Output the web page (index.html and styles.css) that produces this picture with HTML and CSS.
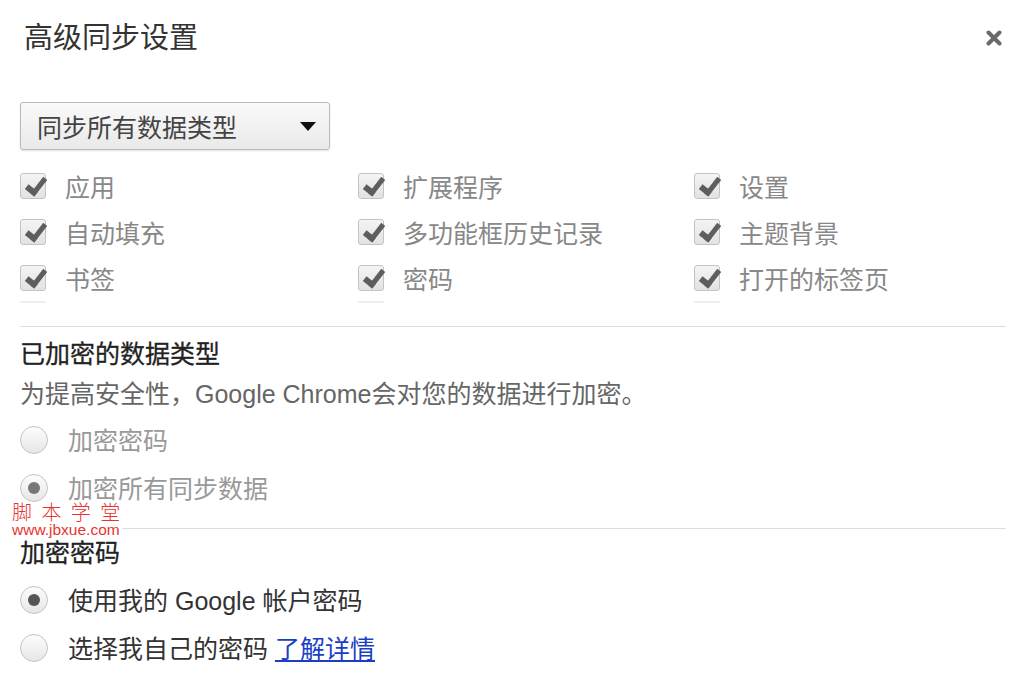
FILE: index.html
```html
<!DOCTYPE html>
<html>
<head>
	<title>高级同步设置</title>
	<meta charset="utf-8">
	<link rel="stylesheet" href="styles.css">
</head>
<body>
	<div class="dialog">
		<div class="header">
			<h1>高级同步设置</h1>
			<svg class="close" width="16" height="16" viewBox="0 0 16 16">
				<path d="M2.5 2.5 L13.5 13.5 M13.5 2.5 L2.5 13.5" stroke="#6a6a6a" stroke-width="4" stroke-linecap="round"/>
			</svg>
		</div>

		<div class="select">
			<span>同步所有数据类型</span>
			<span class="arrow"></span>
		</div>

		<div class="types">
			<div class="item"><span class="check"></span><span>应用</span></div>
			<div class="item"><span class="check"></span><span>扩展程序</span></div>
			<div class="item"><span class="check"></span><span>设置</span></div>
			<div class="item"><span class="check"></span><span>自动填充</span></div>
			<div class="item"><span class="check"></span><span>多功能框历史记录</span></div>
			<div class="item"><span class="check"></span><span>主题背景</span></div>
			<div class="item"><span class="check"></span><span>书签</span></div>
			<div class="item"><span class="check"></span><span>密码</span></div>
			<div class="item"><span class="check"></span><span>打开的标签页</span></div>
		</div>
		<div class="peek">
			<span></span><span></span><span></span>
		</div>

		<div class="section">
			<h3>已加密的数据类型</h3>
			<p class="desc">为提高安全性，Google Chrome会对您的数据进行加密。</p>
			<div class="option disabled"><span class="radio"></span><span class="label">加密密码</span></div>
			<div class="option disabled"><span class="radio on"></span><span class="label">加密所有同步数据</span></div>
		</div>

		<div class="section second">
			<h3>加密密码</h3>
			<div class="option"><span class="radio on"></span><span class="label">使用我的 Google 帐户密码</span></div>
			<div class="option"><span class="radio"></span><span class="label">选择我自己的密码 <a href="#">了解详情</a></span></div>
		</div>

		<div class="mark">
			<div class="mark-cn">脚 本 学 堂</div>
			<div class="mark-url">www.jbxue.com</div>
		</div>
	</div>
</body>
</html>
```

FILE: styles.css
```css
*{
	padding: 0;
	margin: 0;
	box-sizing: border-box;
}
body{
	background: #fff;
	font-family: "Liberation Sans", "Noto Sans CJK SC", sans-serif;
	color: #333;
}
.dialog{
	position: relative;
	width: 1024px;
	height: 695px;
	padding: 0 18px 0 20px;
	overflow: hidden;
}
.header{
	display: flex;
	justify-content: space-between;
	align-items: center;
	height: 40px;
	margin-top: 15px;
}
.header h1{
	font-size: 29px;
	font-weight: normal;
	padding-left: 4px;
	color: #333;
}
.close{
	margin-right: 4px;
	margin-top: 6px;
}

.select{
	display: flex;
	justify-content: space-between;
	align-items: center;
	width: 310px;
	height: 48px;
	margin-top: 47px;
	padding: 0 13px 0 16px;
	border: 1px solid #bbb;
	border-radius: 3px;
	background: linear-gradient(#fafafa, #e9e9e9);
	box-shadow: 0 1px 2px rgba(0,0,0,0.12);
	font-size: 25px;
	color: #444;
}
.select .arrow{
	width: 0;
	height: 0;
	border-left: 8px solid transparent;
	border-right: 8px solid transparent;
	border-top: 9px solid #111;
}

.types{
	display: grid;
	grid-template-columns: 338px 336px 1fr;
	grid-auto-rows: 46px;
	margin-top: 13px;
}
.item{
	display: flex;
	align-items: center;
	gap: 19px;
	font-size: 25px;
	color: #888;
}
.check{
	position: relative;
	width: 26px;
	height: 26px;
	border: 1px solid #c4c4c4;
	border-radius: 3px;
	background: linear-gradient(#f4f4f4, #e2e2e2);
}
.check::after{
	content: "";
	position: absolute;
	left: 9px;
	top: 0;
	width: 7px;
	height: 15px;
	border-right: 5px solid #5e5e5e;
	border-bottom: 6px solid #5e5e5e;
	transform: rotate(38deg);
}
.peek{
	display: grid;
	grid-template-columns: 338px 336px 1fr;
	height: 4px;
}
.peek span{
	width: 26px;
	height: 2px;
	background: #eee;
}

.section{
	border-top: 1px solid #ddd;
	margin-top: 21px;
	padding-top: 7px;
}
.section h3{
	font-size: 25px;
	font-weight: normal;
	line-height: 40px;
	color: #222;
	-webkit-text-stroke: 0.3px #222;
}
.desc{
	font-size: 25px;
	line-height: 40px;
	color: #666;
	margin-bottom: 2px;
}
.option{
	display: flex;
	align-items: center;
	gap: 20px;
	height: 48px;
	font-size: 25px;
	line-height: 1.1;
	color: #333;
}
.option .label{
	padding-top: 3px;
}
.option.disabled{
	color: #999;
}
.radio{
	position: relative;
	width: 28px;
	height: 28px;
	border: 1px solid #c4c4c4;
	border-radius: 50%;
	background: linear-gradient(#fdfdfd, #e6e6e6);
}
.radio.on::after{
	content: "";
	position: absolute;
	left: 7px;
	top: 7px;
	width: 12px;
	height: 12px;
	border-radius: 50%;
	background: #555;
}
.disabled .radio.on::after{
	background: #777;
}
.option a{
	color: #1a3fc6;
	text-decoration: underline;
}
.section.second{
	margin-top: 16px;
	padding-top: 4px;
}
.second h3{
	margin-bottom: 3px;
}

.mark{
	position: absolute;
	left: 12px;
	top: 502px;
	padding-right: 2px;
	color: #e8332f;
	background: #fff;
}
.mark-cn{
	font-family: "Noto Sans CJK SC", sans-serif;
	font-size: 20px;
	line-height: 20px;
	word-spacing: 5px;
	font-weight: 300;
}
.mark-url{
	font-family: "Liberation Sans", sans-serif;
	font-size: 15.5px;
	line-height: 15px;
}
```
